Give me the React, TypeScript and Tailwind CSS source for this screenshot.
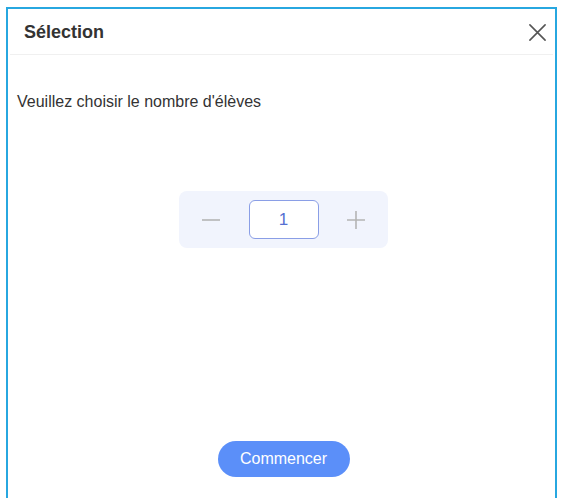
import React from "react";

export default function App() {
  return (
    <div className="w-[562px] h-[498px] bg-white overflow-hidden relative" style={{ fontFamily: '"Liberation Sans", Arial, sans-serif' }}>
      <div className="absolute left-[6px] top-[7px] w-[551px] h-[500px] border-2 border-[#27a7e0] flex flex-col">
        <div className="h-[46px] pt-[2px] flex items-center justify-between pl-[14px] pr-[6px] mx-[2px] border-b border-[#f0f0f0]">
          <span className="text-[18px] font-bold text-[#333]">Sélection</span>
          <svg width="19" height="19" viewBox="0 0 20 20">
            <path d="M2 2L18 18M18 2L2 18" stroke="#555" strokeWidth="1.7" strokeLinecap="round" />
          </svg>
        </div>
        <div className="pl-[9px] pt-[35px] text-[16px] leading-[24px] text-[#333]">Veuillez choisir le nombre d'élèves</div>
        <div className="flex justify-center mt-[77px] pl-[4px]">
          <div className="w-[209px] h-[57px] rounded-[8px] bg-[#f1f4fd] flex items-center justify-between px-[22px]">
            <svg width="20" height="20" viewBox="0 0 20 20">
              <path d="M1 10H19" stroke="#b4b4b4" strokeWidth="1.6" />
            </svg>
            <div className="w-[70px] h-[39px] rounded-[6px] border border-[#8a9ee6] bg-white flex items-center justify-center text-[17px] text-[#5670d2]">1</div>
            <svg width="20" height="20" viewBox="0 0 20 20">
              <path d="M1 10H19M10 1V19" stroke="#b4b4b4" strokeWidth="1.6" />
            </svg>
          </div>
        </div>
        <div className="flex justify-center mt-[193px] pl-[4px]">
          <button className="w-[132px] h-[36px] rounded-full bg-[#5b8ff9] text-white text-[16px]">Commencer</button>
        </div>
      </div>
    </div>
  );
}
